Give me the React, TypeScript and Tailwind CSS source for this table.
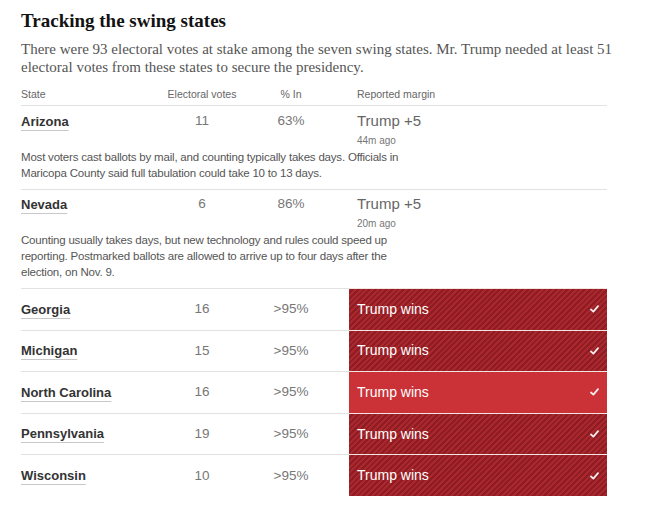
const detailed = [
  {
    name: 'Arizona',
    votes: 11,
    pct: '63%',
    margin: 'Trump +5',
    updated: '44m ago',
    note: 'Most voters cast ballots by mail, and counting typically takes days. Officials in Maricopa County said full tabulation could take 10 to 13 days.',
  },
  {
    name: 'Nevada',
    votes: 6,
    pct: '86%',
    margin: 'Trump +5',
    updated: '20m ago',
    note: 'Counting usually takes days, but new technology and rules could speed up reporting. Postmarked ballots are allowed to arrive up to four days after the election, on Nov. 9.',
  },
];

const called = [
  { name: 'Georgia', votes: 16, striped: true },
  { name: 'Michigan', votes: 15, striped: true },
  { name: 'North Carolina', votes: 16, striped: false },
  { name: 'Pennsylvania', votes: 19, striped: true },
  { name: 'Wisconsin', votes: 10, striped: true },
];

function Check() {
  return (
    <svg width="9" height="8" viewBox="0 0 9 8" className="opacity-90">
      <path d="M1 4.5 L3.4 6.6 L8 1.2" fill="none" stroke="#fff" strokeWidth="1.8" strokeLinecap="round" strokeLinejoin="round" />
    </svg>
  );
}

function StateName({ name }: { name: string }) {
  return (
    <span className="text-[13px] font-bold text-[#333] underline decoration-[#c8c8c8] decoration-1 underline-offset-[4px]">
      {name}
    </span>
  );
}

export default function App() {
  return (
    <div className="w-[649px] h-[515px] bg-white pl-[21px] pt-[9px] font-['Liberation_Sans',Arial,sans-serif]">
      {/* Header */}
      <h1 className="font-['Liberation_Serif',serif] text-[19px] font-bold leading-[24px] text-[#121212]">
        Tracking the swing states
      </h1>
      <p className="mt-[7px] whitespace-nowrap font-['Liberation_Serif',serif] text-[15px] leading-[18px] text-[#555]">
        There were 93 electoral votes at stake among the seven swing states. Mr. Trump needed at least 51
        <br />
        electoral votes from these states to secure the presidency.
      </p>

      {/* Table */}
      <div className="mt-[12px] w-[586px]">
        <div className="grid grid-cols-[140px_82px_96px_1fr] h-[17px] items-start text-[10.5px] leading-[12px] text-[#666]">
          <div>State</div>
          <div className="text-center">Electoral votes</div>
          <div className="text-center">% In</div>
          <div className="pl-[18px]">Reported margin</div>
        </div>

        {detailed.map((s, i) => (
          <div key={s.name} className={i === 0 ? 'border-t border-[#e2e2e2] pt-[6px]' : 'border-t border-[#e2e2e2] pt-[5px]'}>
            <div className="grid grid-cols-[140px_82px_96px_1fr] items-start">
              <div className="leading-[18px]">
                <StateName name={s.name} />
              </div>
              <div className="text-center text-[13.5px] leading-[18px] text-[#777]">{s.votes}</div>
              <div className="text-center text-[13.5px] leading-[18px] text-[#777]">{s.pct}</div>
              <div className="pl-[18px]">
                <div className="text-[15px] leading-[18px] text-[#666]">{s.margin}</div>
                <div className="mt-[2px] text-[10px] leading-[17px] text-[#777]">{s.updated}</div>
              </div>
            </div>
            <p className="w-[400px] pb-[8px] text-[11.5px] tracking-[-0.2px] leading-[16px] text-[#555]">{s.note}</p>
          </div>
        ))}

        {called.map((s) => (
          <div key={s.name} className="grid grid-cols-[140px_82px_96px_1fr] h-[41.6px] border-t border-[#e2e2e2]">
            <div className="flex items-center">
              <StateName name={s.name} />
            </div>
            <div className="flex items-center justify-center text-[13.5px] text-[#777]">{s.votes}</div>
            <div className="flex items-center justify-center text-[13.5px] text-[#777]">&gt;95%</div>
            <div className="pl-[10px] -mt-px">
              <div
                className={
                  s.striped
                    ? 'h-full border-t border-[#f3e4e4] flex items-center justify-between pl-[8px] pr-[8px] bg-[repeating-linear-gradient(135deg,#a8282e_0px,#a8282e_2px,#8e1c22_2px,#8e1c22_4px)]'
                    : 'h-full border-t border-[#f3e4e4] flex items-center justify-between pl-[8px] pr-[8px] bg-[#cb3238]'
                }
              >
                <span className="text-[14px] text-white">Trump wins</span>
                <Check />
              </div>
            </div>
          </div>
        ))}
      </div>
    </div>
  );
}
